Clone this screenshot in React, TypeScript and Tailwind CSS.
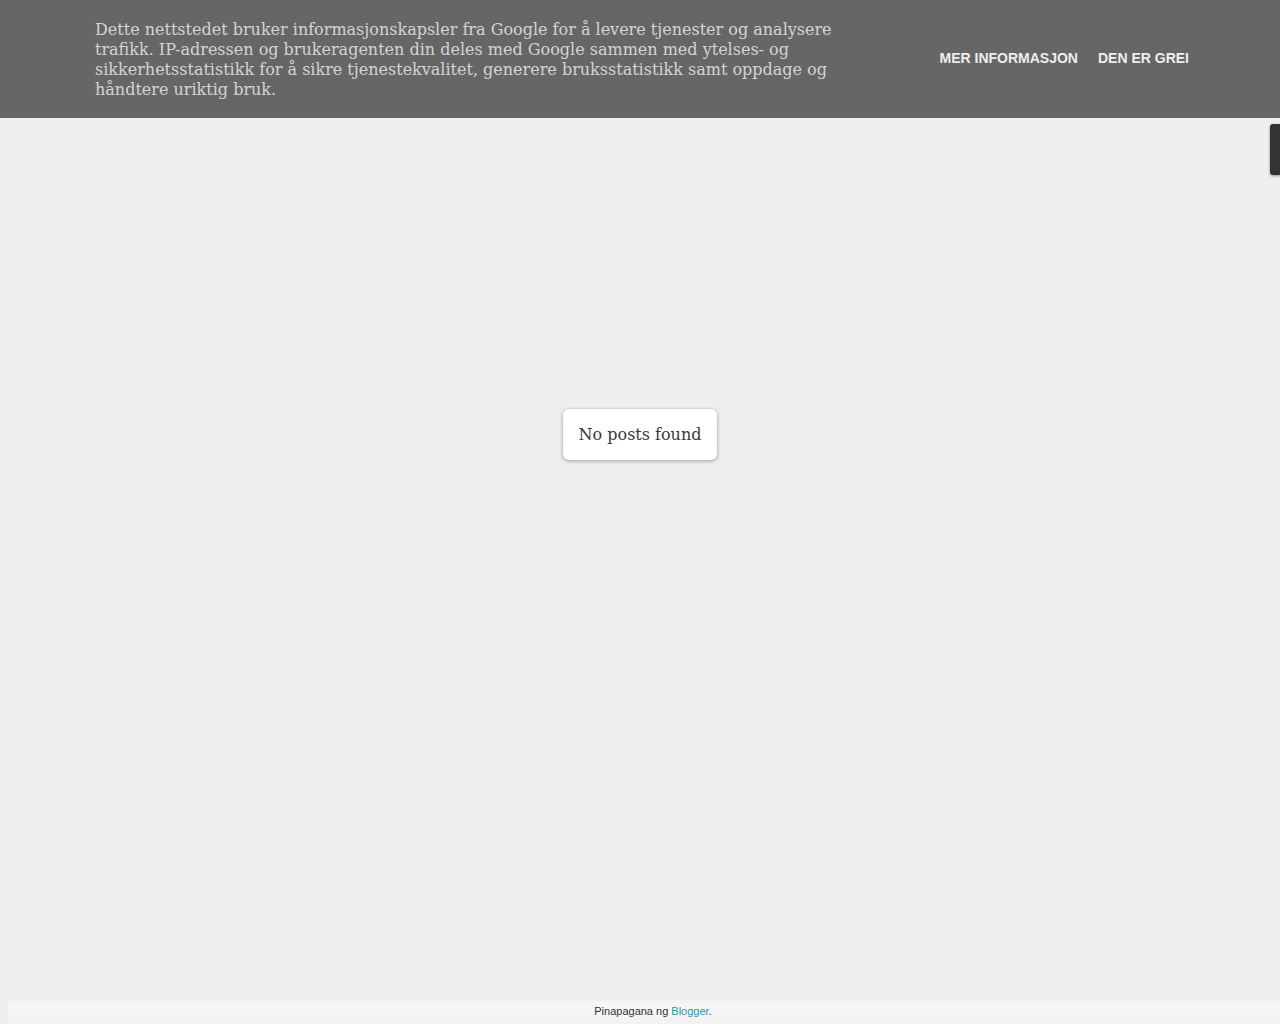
export default function App() {
  return (
    <div className="relative flex min-h-screen flex-col bg-[#efefef]">
      {/* Cookie notice */}
      <div className="flex h-[118px] items-center justify-between bg-[#666666] pl-[95px] pr-[91px]">
        <p className="w-[760px] pt-[2px] text-[16px] leading-[20px] text-[#d4d4d4] [font-family:'DejaVu_Serif',serif]">
          Dette nettstedet bruker informasjonskapsler fra Google for å levere tjenester og analysere trafikk. IP-adressen og brukeragenten din deles med Google sammen med ytelses- og sikkerhetsstatistikk for å sikre tjenestekvalitet, generere bruksstatistikk samt oppdage og håndtere uriktig bruk.
        </p>
        <div className="flex items-center gap-[20px] pb-[1px] text-[14px] font-bold text-[#eeeeee] [font-family:'Liberation_Sans',Arial,sans-serif]">
          <span>MER INFORMASJON</span>
          <span>DEN ER GREI</span>
        </div>
      </div>

      {/* Side tab */}
      <div className="absolute right-0 top-[124px] h-[51px] w-[10px] rounded-l-[3px] bg-[#333333] shadow-[0_1px_3px_rgba(0,0,0,0.4)]" />

      <main className="flex flex-1 justify-center pt-[291px]">
        <div className="flex h-[51px] items-center rounded-[6px] bg-white px-[16px] text-[16px] leading-[22px] text-[#3a3a3a] shadow-[0_1px_4px_rgba(0,0,0,0.35)] [font-family:'DejaVu_Serif',serif]">
          No posts found
        </div>
      </main>

      <footer className="ml-[8px] flex h-[26px] items-center justify-center bg-[linear-gradient(#f0f0f0,#f7f7f7_30%,#f2f2f2)] pl-[18px] text-[11px] text-[#333333] [font-family:'Liberation_Sans',Arial,sans-serif]">
        <span>
          Pinapagana ng <a className="text-[#2198a6]">Blogger</a>.
        </span>
      </footer>
    </div>
  );
}
